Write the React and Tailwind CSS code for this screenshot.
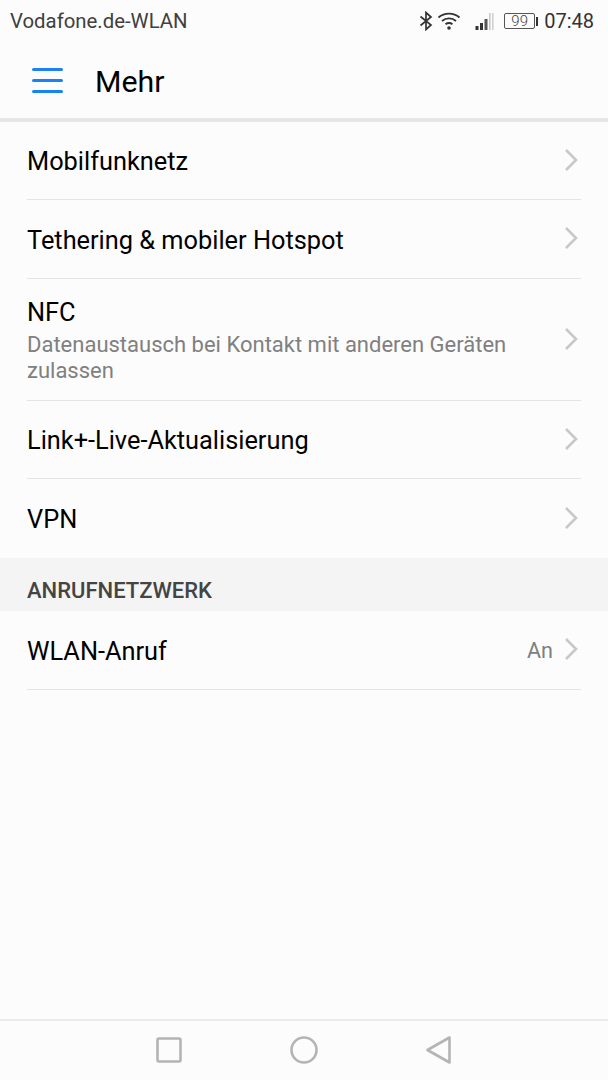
import React from "react";

const Chevron = () => (
  <svg width="14" height="22" viewBox="0 0 14 22" fill="none" className="shrink-0">
    <path d="M2 1 L12 11 L2 21" stroke="#c8c8c8" strokeWidth="2.6" />
  </svg>
);

const Row = ({ title, sub, value, h = "h-[78px]", pad = "" }) => (
  <div className={`${h} flex items-center border-b border-[#e4e4e4]`}>
    <div className={`flex-1 min-w-0 ${pad}`}>
      <div className="text-[25.35px] leading-[32px] text-black">{title}</div>
      {sub && (
        <div className="mt-[4px] text-[22px] leading-[26px] text-[#808080] pr-[40px]">{sub}</div>
      )}
    </div>
    {value && <span className="pt-[3px] text-[21.6px] text-[#808080] mr-[11px]">{value}</span>}
    <div className="mr-[3px] mb-[2px]"><Chevron /></div>
  </div>
);

export default function App() {
  return (
    <div className="w-[608px] h-[1080px] bg-[#fcfcfc] flex flex-col font-['Roboto',sans-serif] overflow-hidden">
      <div className="h-[41px] flex items-center justify-between pl-[10px] pr-[14px] pt-[1px] text-[#404040] text-[20.35px] shrink-0">
        <span>Vodafone.de-WLAN</span>
        <div className="flex items-center">
          <svg width="14" height="20" viewBox="0 0 14 20" fill="none" stroke="#333" strokeWidth="1.7" className="mr-[4px]">
            <path d="M1.5 5.5 L12 14 L7 18.5 V1.5 L12 6 L1.5 14.5" />
          </svg>
          <svg width="24" height="20" viewBox="0 0 24 20" fill="none" stroke="#333" strokeWidth="1.8" className="mr-[14px]">
            <path d="M1.5 6.5 C7.5 1.2 16.5 1.2 22.5 6.5" />
            <path d="M5 10 C9 6.5 15 6.5 19 10" />
            <path d="M8.5 13.3 C10.8 11.6 13.2 11.6 15.5 13.3" />
            <circle cx="12" cy="17" r="1.8" fill="#333" stroke="none" />
          </svg>
          <svg width="20" height="20" viewBox="0 0 20 20" className="mr-[9px]">
            <rect x="0.5" y="15" width="3" height="4" fill="#333" />
            <rect x="5" y="12" width="3" height="7" fill="#333" />
            <rect x="9.5" y="8" width="3" height="11" fill="#555" />
            <rect x="14" y="2" width="1.6" height="17" fill="#c8c8c8" />
            <rect x="17" y="2" width="1.6" height="17" fill="#d0d0d0" />
          </svg>
          <div className="w-[31px] h-[16px] border border-[#555] rounded-[2px] flex items-center justify-center text-[15px] leading-none text-[#444] font-light">99</div>
          <div className="w-[2px] h-[9px] bg-[#333] ml-[1px] mr-[6px]" />
          <span className="text-[20px] text-[#333]">07:48</span>
        </div>
      </div>

      <div className="h-[81px] shrink-0 flex items-center border-b-[4px] border-[#e6e6e6]">
        <div className="ml-[32px] w-[31px] flex flex-col gap-[8px] pt-[2px]">
          <div className="h-[3px] bg-[#1a82f7] rounded-full" />
          <div className="h-[3px] bg-[#1a82f7] rounded-full" />
          <div className="h-[3px] bg-[#1a82f7] rounded-full" />
        </div>
        <span className="ml-[32px] pt-[5px] text-[30.3px] text-black">Mehr</span>
      </div>

      <div className="mx-[27px]">
        <Row title="Mobilfunknetz" />
        <Row title="Tethering & mobiler Hotspot" h="h-[79px]" pad="pt-[2px]" />
        <Row title="NFC" sub="Datenaustausch bei Kontakt mit anderen Geräten zulassen" h="h-[122px]" pad="pt-[1px]" />
        <Row title="Link+-Live-Aktualisierung" h="h-[78px]" />
        <div className="h-[79px] flex items-center">
          <div className="flex-1 text-[25.35px] leading-[32px] text-black">VPN</div>
          <div className="mr-[3px] mb-[2px]"><Chevron /></div>
        </div>
      </div>

      <div className="h-[53px] shrink-0 bg-[#f4f4f4] flex items-center pt-[12px] px-[27px] text-[22px] font-medium text-[#444]">
        ANRUFNETZWERK
      </div>

      <div className="mx-[27px]">
        <Row title="WLAN-Anruf" value="An" h="h-[79px]" pad="pt-[2px]" />
      </div>

      <div className="flex-1" />

      <div className="h-[61px] shrink-0 border-t-[2px] border-[#ebebeb] flex items-center justify-center gap-[108px] pb-[2px]">
        <svg width="26" height="26" viewBox="0 0 26 26" fill="none" stroke="#b4b4b4" strokeWidth="2.6">
          <rect x="1.5" y="1.5" width="23" height="23" rx="1.5" />
        </svg>
        <svg width="28" height="28" viewBox="0 0 28 28" fill="none" stroke="#b4b4b4" strokeWidth="2.6">
          <circle cx="14" cy="14" r="12.5" />
        </svg>
        <svg width="26" height="28" viewBox="0 0 26 28" fill="none" stroke="#b4b4b4" strokeWidth="2.6" strokeLinejoin="round">
          <path d="M23.5 1.5 V26.5 L1.5 14 Z" />
        </svg>
      </div>
    </div>
  );
}
